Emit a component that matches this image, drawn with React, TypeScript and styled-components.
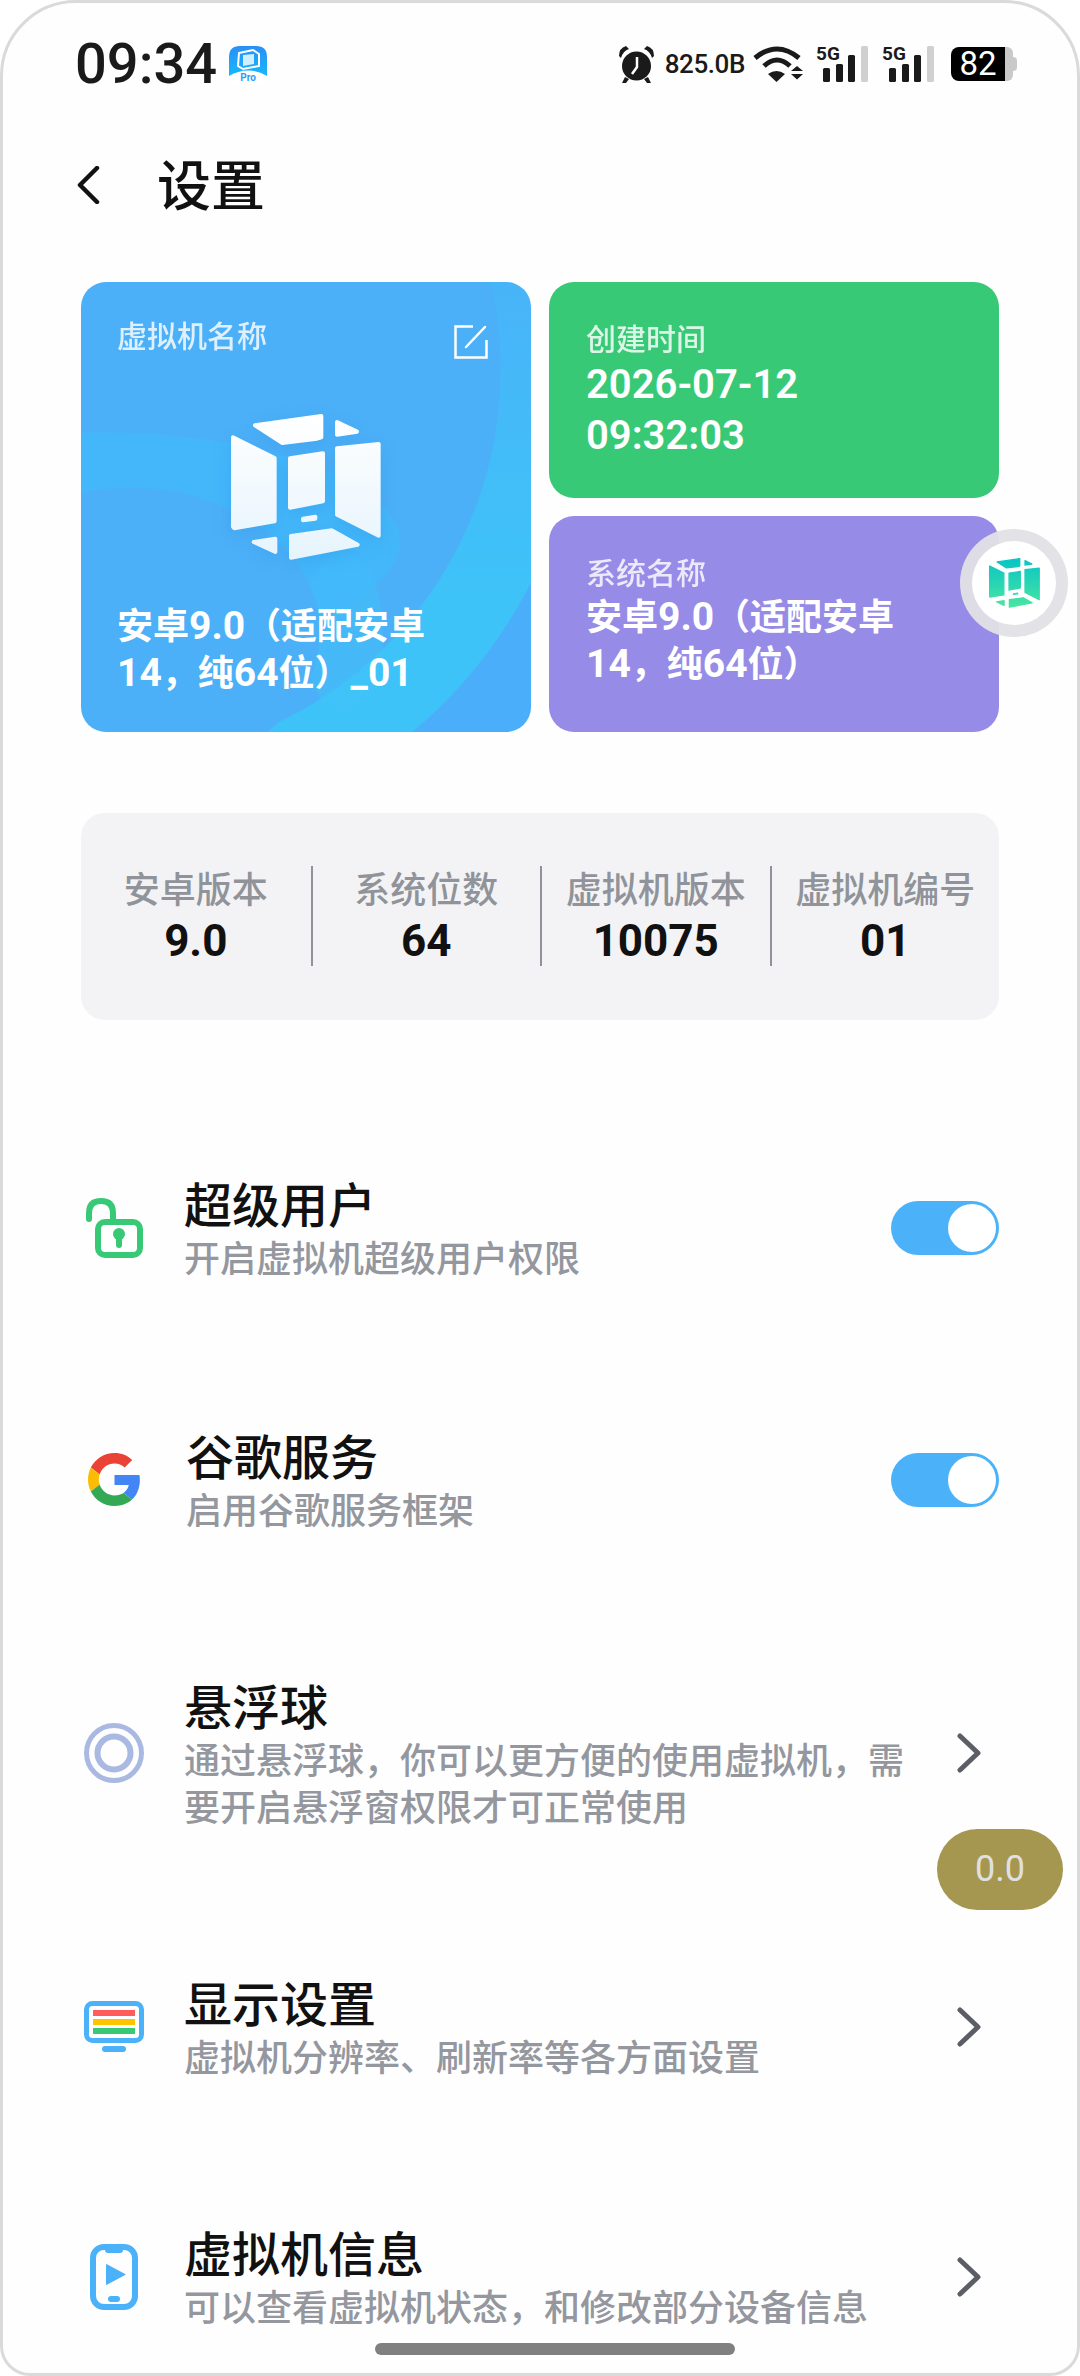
import type { ReactNode } from "react";
import styled, { createGlobalStyle } from "styled-components";

const GlobalStyle = createGlobalStyle`
  html, body {
    margin: 0;
    padding: 0;
    background: #fff;
  }
  body {
    font-family: Roboto, "Noto Sans CJK SC", sans-serif;
  }
`;

function CubeLogo({ id, width, height, from, to }: { id: string; width: number; height: number; from: string; to: string }) {
  return (
    <svg width={width} height={height} viewBox="0 0 450 438" preserveAspectRatio="none">
      <defs>
        <linearGradient id={id} gradientUnits="userSpaceOnUse" x1="0" y1="0" x2="0" y2="438">
          <stop offset="0" stopColor={from} />
          <stop offset="1" stopColor={to} />
        </linearGradient>
      </defs>
      <g fill={`url(#${id})`} stroke={`url(#${id})`} strokeWidth="12" strokeLinejoin="round">
        <path d="M72 34 L271 6 V70 L258 74 L154 87 Z" />
        <path d="M318 24 L378 53 L318 62 Z" />
        <path d="M6 70 L131 132 V322 L10 343 L6 338 Z" />
        <path d="M177 133 L276 118 V262 L177 281 Z" />
        <path d="M318 103 L443 90 V365 L318 302 Z" />
        <path d="M216 314 L253 308 V314 L216 319 Z" />
        <path d="M68 384 L133 374 V414 Z" />
        <path d="M180 366 L302 349 L380 392 L180 431 Z" />
      </g>
    </svg>
  );
}

function WifiIcon() {
  return (
    <svg width="50" height="36" viewBox="0 0 50 36">
      <path d="M2 12 Q24 -6 46 12" fill="none" stroke="#1a1a1a" strokeWidth="5" />
      <path d="M11 20 Q24 8 37 20" fill="none" stroke="#1a1a1a" strokeWidth="5" />
      <path d="M23.5 36 L15 28 Q23.5 22 32 28 Z" fill="#1a1a1a" />
      <path d="M44 20 L50 25 H38 Z M38 28 H50 L44 33.5 Z" fill="#1a1a1a" />
    </svg>
  );
}

function SignalIcon() {
  return (
    <SignalWrap>
      <svg width="51" height="36" viewBox="0 0 51 36">
        <rect x="6" y="22" width="7" height="14" rx="1.5" fill="#1a1a1a" />
        <rect x="19" y="18" width="7" height="18" rx="1.5" fill="#1a1a1a" />
        <rect x="31" y="9" width="7" height="27" rx="1.5" fill="#1a1a1a" />
        <rect x="44" y="0" width="7" height="36" rx="1.5" fill="#d0d0d0" />
      </svg>
      <NetworkType>5G</NetworkType>
    </SignalWrap>
  );
}

function AlarmIcon() {
  return (
    <svg width="37" height="38" viewBox="0 0 37 38">
      <circle cx="18.5" cy="21" r="14.5" fill="#1a1a1a" />
      <path d="M1 11 Q1 3 8 1 L11 4 Q5 6 3 13 Z M36 11 Q36 3 29 1 L26 4 Q32 6 34 13 Z" fill="#1a1a1a" />
      <path d="M7 32 L4 38 H8 L11 34 Z M30 32 L33 38 H29 L26 34 Z" fill="#1a1a1a" />
      <path d="M19 12 V22 L14 29" fill="none" stroke="#fff" strokeWidth="2.5" />
    </svg>
  );
}

function AppBadge() {
  return (
    <svg width="38" height="37" viewBox="0 0 38 37">
      <defs>
        <linearGradient id="badgeFill" x1="0" y1="0" x2="0" y2="1">
          <stop offset="0" stopColor="#2a8ff5" />
          <stop offset="1" stopColor="#12c2ff" />
        </linearGradient>
      </defs>
      <path d="M0 11 Q0 0 11 0 H27 Q38 0 38 11 V30 Q38 37 31 37 H7 Q0 37 0 30 Z" fill="url(#badgeFill)" />
      <path d="M0 33 V30 Q19 19 38 30 V33 Q38 37 34 37 H4 Q0 37 0 33 Z" fill="#fff" />
      <path d="M10 7 L24 4 L30 8 V20 L14 23 L9 20 Z" fill="none" stroke="#fff" strokeWidth="2" />
      <path d="M14 9 L25 8 V18 L14 20 Z" fill="#cfeeff" />
      <text x="19" y="35" textAnchor="middle" fontFamily="Roboto" fontWeight="700" fontSize="10" fill="#2a9df5">Pro</text>
    </svg>
  );
}

function LockIcon() {
  return (
    <svg width="57" height="60" viewBox="0 0 57 60">
      <path d="M3 21 V15 Q3 3 15 3 Q27 3 27 15 V22" fill="none" stroke="#38c976" strokeWidth="6" strokeLinecap="round" />
      <rect x="12" y="24" width="42" height="33" rx="7" fill="#fff" stroke="#38c976" strokeWidth="6" />
      <circle cx="33" cy="36" r="6" fill="#38c976" />
      <path d="M33 38 V47" stroke="#38c976" strokeWidth="6" strokeLinecap="round" />
    </svg>
  );
}

function GoogleIcon() {
  return (
    <svg width="53" height="53" viewBox="0 0 48 48">
      <path fill="#EA4335" d="M24 9.5c3.54 0 6.71 1.22 9.21 3.6l6.85-6.85C35.9 2.38 30.47 0 24 0 14.62 0 6.51 5.38 2.56 13.22l7.98 6.19C12.43 13.72 17.74 9.5 24 9.5z" />
      <path fill="#4285F4" d="M46.98 24.55c0-1.57-.15-3.09-.38-4.55H24v9.02h12.94c-.58 2.96-2.26 5.48-4.78 7.18l7.73 6c4.51-4.18 7.09-10.36 7.09-17.65z" />
      <path fill="#FBBC05" d="M10.53 28.59c-.48-1.45-.76-2.99-.76-4.59s.27-3.14.76-4.59l-7.98-6.19C.92 16.46 0 20.12 0 24c0 3.88.92 7.54 2.56 10.78l7.97-6.19z" />
      <path fill="#34A853" d="M24 48c6.48 0 11.93-2.13 15.89-5.81l-7.73-6c-2.15 1.45-4.92 2.3-8.16 2.3-6.26 0-11.57-4.22-13.47-9.91l-7.98 6.19C6.51 42.62 14.62 48 24 48z" />
    </svg>
  );
}

function BallIcon() {
  return (
    <svg width="60" height="60" viewBox="0 0 60 60">
      <circle cx="30" cy="30" r="27.5" fill="none" stroke="#a9b9e2" strokeWidth="5" />
      <circle cx="30" cy="30" r="16.5" fill="none" stroke="#a9b9e2" strokeWidth="6" />
    </svg>
  );
}

function DisplayIcon() {
  return (
    <svg width="60" height="51" viewBox="0 0 60 51">
      <rect x="2.5" y="2.5" width="55" height="37" rx="6" fill="#fff" stroke="#4bb2f9" strokeWidth="5" />
      <rect x="9" y="9" width="42" height="6" fill="#ff5c5c" />
      <rect x="9" y="18" width="42" height="6" fill="#ffc400" />
      <rect x="9" y="27" width="42" height="6" fill="#38c976" />
      <rect x="18" y="45" width="24" height="6" rx="3" fill="#4bb2f9" />
    </svg>
  );
}

function PhonePlayIcon() {
  return (
    <svg width="48" height="66" viewBox="0 0 48 66">
      <rect x="3" y="3" width="42" height="60" rx="11" fill="none" stroke="#4bb2f9" strokeWidth="6" />
      <rect x="15" y="2" width="18" height="7" rx="3" fill="#4bb2f9" />
      <path d="M16.5 20 L36 30.5 L16.5 41 Q16 41 16 40 V21 Q16 20 16.5 20 Z" fill="#4bb2f9" />
      <rect x="18" y="52" width="12" height="6" rx="3" fill="#4bb2f9" />
    </svg>
  );
}

function Chevron() {
  return (
    <svg width="24" height="40" viewBox="0 0 24 40">
      <path d="M3 3 L21 20 L3 37" fill="none" stroke="#5c5e66" strokeWidth="5" strokeLinecap="round" strokeLinejoin="round" />
    </svg>
  );
}

type SettingRow = {
  icon: ReactNode;
  title: string;
  desc: string[];
  hasSwitch?: boolean;
  top: number;
  bodyIndent?: number;
};

const settingRows: SettingRow[] = [
  { icon: <LockIcon />, title: "超级用户", desc: ["开启虚拟机超级用户权限"], hasSwitch: true, top: 0 },
  { icon: <GoogleIcon />, title: "谷歌服务", desc: ["启用谷歌服务框架"], hasSwitch: true, top: 145, bodyIndent: 2 },
  { icon: <BallIcon />, title: "悬浮球", desc: ["通过悬浮球，你可以更方便的使用虚拟机，需", "要开启悬浮窗权限才可正常使用"], top: 143 },
  { icon: <DisplayIcon />, title: "显示设置", desc: ["虚拟机分辨率、刷新率等各方面设置"], top: 143 },
  { icon: <PhonePlayIcon />, title: "虚拟机信息", desc: ["可以查看虚拟机状态，和修改部分设备信息"], top: 143 },
];

const stats = [
  { label: "安卓版本", value: "9.0" },
  { label: "系统位数", value: "64" },
  { label: "虚拟机版本", value: "10075" },
  { label: "虚拟机编号", value: "01" },
];

export default function App() {
  return (
    <>
      <GlobalStyle />
      <Frame>
        <StatusBar>
          <Clock>
            <Time>09:34</Time>
            <AppBadge />
          </Clock>
          <StatusIcons>
            <AlarmIcon />
            <StatusSlot $gap={10}>
              <NetSpeed>825.0B</NetSpeed>
            </StatusSlot>
            <StatusSlot $gap={8}>
              <WifiIcon />
            </StatusSlot>
            <StatusSlot $gap={14}>
              <SignalIcon />
            </StatusSlot>
            <StatusSlot $gap={15}>
              <SignalIcon />
            </StatusSlot>
            <StatusSlot $gap={17}>
              <BatteryBody>82</BatteryBody>
              <BatteryCap />
            </StatusSlot>
          </StatusIcons>
        </StatusBar>

        <TitleBar>
          <svg width="24" height="38" viewBox="0 0 24 38">
            <path d="M21 2 L4 19 L21 36" fill="none" stroke="#111" strokeWidth="4.5" strokeLinecap="round" strokeLinejoin="round" />
          </svg>
          <PageTitle>设置</PageTitle>
        </TitleBar>

        <CardGrid>
          <NameCard>
            <CardLabel>虚拟机名称</CardLabel>
            <EditIcon width="34" height="34" viewBox="0 0 34 34">
              <path d="M19 1.5 H1.5 V32.5 H32.5 V15" fill="none" stroke="#fff" strokeWidth="2.5" />
              <path d="M12 22 L31 2" fill="none" stroke="#fff" strokeWidth="2.5" strokeLinecap="round" />
            </EditIcon>
            <LogoWrap>
              <CubeLogo id="mainCube" width={150} height={146} from="#ffffff" to="#e6f4fd" />
            </LogoWrap>
            <CardName>
              安卓<Latin>9.0</Latin>（适配安卓
              <br />
              <Latin>14</Latin>，纯<Latin>64</Latin>位）<Latin>_01</Latin>
            </CardName>
          </NameCard>
          <SideCard $color="#38c976">
            <CardLabel>创建时间</CardLabel>
            <DateText>
              2026-07-12
              <br />
              09:32:03
            </DateText>
          </SideCard>
          <SideCard $color="#968be6">
            <CardLabel>系统名称</CardLabel>
            <SystemName>
              安卓<Latin>9.0</Latin>（适配安卓
              <br />
              <Latin>14</Latin>，纯<Latin>64</Latin>位）
            </SystemName>
          </SideCard>
        </CardGrid>

        <StatsPanel>
          {stats.map((s) => (
            <StatCell key={s.label}>
              <StatLabel>{s.label}</StatLabel>
              <StatValue>{s.value}</StatValue>
            </StatCell>
          ))}
        </StatsPanel>

        <SettingList>
          {settingRows.map((row) => (
            <Row key={row.title} $top={row.top}>
              <IconSlot>{row.icon}</IconSlot>
              <RowBody $indent={row.bodyIndent ?? 0}>
                <RowTitle>{row.title}</RowTitle>
                {row.desc.map((line) => (
                  <RowDesc key={line}>{line}</RowDesc>
                ))}
              </RowBody>
              {row.hasSwitch ? (
                <Switch>
                  <Knob />
                </Switch>
              ) : (
                <ChevronSlot>
                  <Chevron />
                </ChevronSlot>
              )}
            </Row>
          ))}
        </SettingList>

        <FloatBall>
          <FloatInner>
            <CubeLogo id="ballCube" width={51} height={50} from="#06c4c6" to="#4ae6a0" />
          </FloatInner>
        </FloatBall>
        <FpsPill>0.0</FpsPill>
        <HomeBar />
      </Frame>
    </>
  );
}

const Frame = styled.div`
  position: relative;
  box-sizing: border-box;
  width: 1080px;
  height: 2376px;
  overflow: hidden;
  background: #fefefe;
  border: 3px solid #dadada;
  border-radius: 76px 76px 30px 30px;
`;

const StatusBar = styled.div`
  display: flex;
  justify-content: space-between;
  align-items: center;
  height: 42px;
  margin-top: 40px;
  padding: 0 60px 0 72px;
`;

const Clock = styled.div`
  display: flex;
  align-items: center;
  gap: 12px;
`;

const Time = styled.span`
  font-size: 56px;
  font-weight: 500;
  color: #1a1a1a;
  line-height: 42px;
`;

const StatusIcons = styled.div`
  display: flex;
  align-items: center;
`;

const StatusSlot = styled.div<{ $gap: number }>`
  display: flex;
  align-items: center;
  margin-left: ${(p) => p.$gap}px;
`;

const NetSpeed = styled.span`
  font-size: 26px;
  font-weight: 500;
  letter-spacing: -0.4px;
  color: #1a1a1a;
`;

const SignalWrap = styled.div`
  position: relative;
  display: flex;
`;

const NetworkType = styled.span`
  position: absolute;
  top: -3px;
  left: -1px;
  font-size: 19px;
  font-weight: 700;
  line-height: 22px;
  color: #1a1a1a;
`;

const BatteryBody = styled.div`
  width: 54px;
  height: 34px;
  background: #000;
  color: #fff;
  border-radius: 8px 0 0 8px;
  font-size: 33px;
  line-height: 34px;
  text-align: center;
`;

const BatteryCap = styled.div`
  position: relative;
  width: 8px;
  height: 34px;
  margin-right: 4px;
  background: #c9c9c9;
  border-radius: 0 6px 6px 0;

  &::after {
    content: "";
    position: absolute;
    top: 10px;
    left: 8px;
    width: 4px;
    height: 14px;
    background: #c9c9c9;
    border-radius: 0 4px 4px 0;
  }
`;

const TitleBar = styled.div`
  display: flex;
  align-items: center;
  height: 60px;
  margin-top: 70px;
  padding-left: 73px;
  gap: 57px;
`;

const PageTitle = styled.h1`
  margin: 0 0 6px;
  font-size: 54px;
  font-weight: 500;
  color: #111;
`;

const CardGrid = styled.div`
  display: grid;
  grid-template-columns: 450px 450px;
  grid-template-rows: 216px 216px;
  gap: 18px;
  margin: 67px 0 0 78px;
`;

const NameCard = styled.div`
  position: relative;
  grid-row: span 2;
  display: flex;
  flex-direction: column;
  box-sizing: border-box;
  padding: 35px 36px 0;
  border-radius: 25px;
  color: #fff;
  background:
    radial-gradient(ellipse 190px 145px at 50px 350px, #4bb0f8 99%, transparent 100%),
    radial-gradient(ellipse 300px 110px at 20px 260px, rgba(64, 186, 252, 0.7) 99%, transparent 100%),
    radial-gradient(ellipse 40px 80px at 262px 350px, rgba(64, 194, 248, 0.5) 99%, transparent 100%),
    linear-gradient(to bottom, rgba(75, 176, 248, 0.8), rgba(75, 176, 248, 0) 70%),
    radial-gradient(circle at 29px 88px, #4bb0f8 390px, #3ec3f8 391px, #3ec3f8 471px, #4aaefb 472px);
`;

const CardLabel = styled.div`
  position: relative;
  font-size: 30px;
  font-weight: 500;
  line-height: 40px;
  opacity: 0.82;
`;

const EditIcon = styled.svg`
  position: absolute;
  top: 43px;
  right: 43px;
`;

const LogoWrap = styled.div`
  display: flex;
  justify-content: center;
  margin-top: 57px;
  filter: drop-shadow(0 5px 8px rgba(40, 130, 220, 0.25));
`;

const Latin = styled.span`
  font-size: 39px;
`;

const CardName = styled.div`
  margin-top: 43px;
  font-size: 36px;
  font-weight: 700;
  line-height: 46px;
`;

const SideCard = styled.div<{ $color: string }>`
  box-sizing: border-box;
  padding: 38px 37px 0;
  background: ${(p) => p.$color};
  border-radius: 25px;
  color: #fff;
`;

const DateText = styled.div`
  font-size: 40px;
  font-weight: 600;
  line-height: 51px;
  margin-top: -1px;
`;

const SystemName = styled.div`
  font-size: 36px;
  font-weight: 700;
  line-height: 46px;
`;

const StatsPanel = styled.div`
  display: grid;
  grid-template-columns: repeat(4, 1fr);
  box-sizing: border-box;
  width: 918px;
  height: 207px;
  margin: 81px 0 0 78px;
  padding: 53px 0 0;
  border-radius: 24px;
  background: #f3f3f5;
`;

const StatCell = styled.div`
  box-sizing: border-box;
  height: 100px;
  padding-top: 2px;
  text-align: center;
  border-left: 2px solid #8f9299;

  &:first-child {
    border-left: 0;
  }
`;

const StatLabel = styled.div`
  font-size: 36px;
  font-weight: 500;
  line-height: 46px;
  color: #90939a;
`;

const StatValue = styled.div`
  font-size: 44px;
  font-weight: 700;
  line-height: 54px;
  color: #111;
`;

const SettingList = styled.div`
  margin-top: 154px;
  padding: 0 78px;
`;

const Row = styled.div<{ $top: number }>`
  display: flex;
  align-items: center;
  margin-top: ${(p) => p.$top}px;
`;

const IconSlot = styled.div`
  display: flex;
  justify-content: center;
  flex: 0 0 66px;
`;

const RowBody = styled.div<{ $indent: number }>`
  flex: 1;
  margin: 3px 0 -3px ${(p) => 37 + p.$indent}px;
`;

const RowTitle = styled.div`
  font-size: 48px;
  font-weight: 500;
  line-height: 60px;
  color: #111;
`;

const RowDesc = styled.div`
  font-size: 36px;
  font-weight: 500;
  line-height: 47px;
  color: #94979e;
  white-space: nowrap;
`;

const Switch = styled.div`
  display: flex;
  justify-content: flex-end;
  align-items: center;
  flex: 0 0 auto;
  box-sizing: border-box;
  width: 108px;
  height: 54px;
  padding-right: 3px;
  border-radius: 27px;
  background: #4bb2f9;
`;

const Knob = styled.div`
  width: 48px;
  height: 48px;
  border-radius: 50%;
  background: #fff;
`;

const ChevronSlot = styled.div`
  display: flex;
  flex: 0 0 auto;
  margin-right: 18px;
`;

const FloatBall = styled.div`
  position: absolute;
  top: 526px;
  left: 957px;
  display: flex;
  align-items: center;
  justify-content: center;
  width: 108px;
  height: 108px;
  border-radius: 50%;
  background: rgba(225, 225, 230, 0.95);
`;

const FloatInner = styled.div`
  display: flex;
  align-items: center;
  justify-content: center;
  width: 84px;
  height: 84px;
  border-radius: 50%;
  background: #fff;
`;

const FpsPill = styled.div`
  position: absolute;
  top: 1826px;
  left: 934px;
  width: 126px;
  height: 81px;
  border-radius: 41px;
  background: #a59650;
  color: #e0e0e0;
  font-size: 36px;
  line-height: 81px;
  text-align: center;
`;

const HomeBar = styled.div`
  position: absolute;
  left: 372px;
  bottom: 18px;
  width: 360px;
  height: 12px;
  border-radius: 6px;
  background: #808080;
`;
